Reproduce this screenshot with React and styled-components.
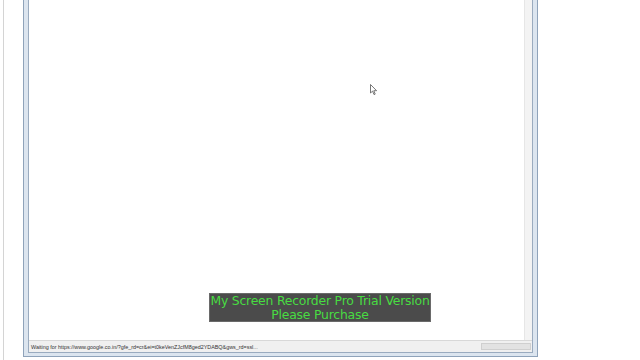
import React from 'react';
import styled, { createGlobalStyle } from 'styled-components';

const GlobalStyle = createGlobalStyle`
  html, body {
    margin: 0;
    padding: 0;
    background: #ffffff;
  }
  body {
    font-family: "Liberation Sans", Arial, sans-serif;
  }
`;

const Screen = styled.div`
  position: relative;
  width: 640px;
  height: 360px;
  display: flex;
  flex-direction: row;
  overflow: hidden;
  background: #ffffff;
`;

const EdgeLine = styled.div`
  width: 1px;
  margin-left: 3px;
  background: #d4d4d4;
`;

const Window = styled.div`
  margin-left: 19px;
  width: 515px;
  height: 357px;
  display: flex;
  flex-direction: column;
  border: 1px solid #8fa3ba;
  border-top: none;
  background: #dce5ef;
  padding: 0 4px 3px 4px;
  box-sizing: border-box;
`;

const Client = styled.div`
  flex: 1;
  display: flex;
  flex-direction: column;
  border: 1px solid #9aabbf;
  border-top: none;
  background: #ffffff;
`;

const Viewport = styled.div`
  flex: 1;
  display: flex;
  flex-direction: row;
`;

const Page = styled.div`
  flex: 1;
  background: #ffffff;
`;

const VScroll = styled.div`
  width: 7px;
  background: #f3f3f3;
  border-left: 1px solid #e6e6e6;
`;

const StatusBar = styled.div`
  height: 11px;
  display: flex;
  align-items: center;
  justify-content: space-between;
  background: #f0f0f0;
  border-top: 1px solid #d8d8d8;
  padding: 0 1px 0 2px;
`;

const StatusText = styled.span`
  font-family: "Liberation Sans", Arial, sans-serif;
  font-size: 5.4px;
  color: #333333;
  white-space: nowrap;
`;

const Progress = styled.div`
  width: 48px;
  height: 5px;
  background: #e2e2e2;
  border: 1px solid #cfcfcf;
`;

const Watermark = styled.div`
  position: absolute;
  left: 209px;
  top: 293px;
  width: 222px;
  height: 29px;
  box-sizing: border-box;
  background: #4b4b4b;
  border: 1px solid #6a6a6a;
  display: flex;
  flex-direction: column;
  align-items: center;
  justify-content: center;
  color: #48dc42;
  font-family: "DejaVu Sans", Verdana, sans-serif;
  font-size: 12.4px;
  line-height: 14px;
  white-space: nowrap;
  letter-spacing: -0.2px;
`;

const Cursor = styled.svg`
  position: absolute;
  left: 370px;
  top: 84px;
`;

export default function App() {
  return (
    <>
      <GlobalStyle />
      <Screen>
        <EdgeLine />
        <Window>
          <Client>
            <Viewport>
              <Page />
              <VScroll />
            </Viewport>
            <StatusBar>
              <StatusText>
                Waiting for https://www.google.co.in/?gfe_rd=cr&amp;ei=t0keVenZJcfM8ged2YDABQ&amp;gws_rd=ssl...
              </StatusText>
              <Progress />
            </StatusBar>
          </Client>
        </Window>
        <Watermark>
          <div>My Screen Recorder Pro Trial Version</div>
          <div>Please Purchase</div>
        </Watermark>
        <Cursor width="8" height="12" viewBox="0 0 8 12">
          <path d="M0.5 0.5 L0.5 9 L2.6 7.1 L4 10.6 L5.2 10.1 L3.8 6.7 L6.6 6.7 Z" fill="#ffffff" stroke="#555555" strokeWidth="0.8" />
        </Cursor>
      </Screen>
    </>
  );
}
